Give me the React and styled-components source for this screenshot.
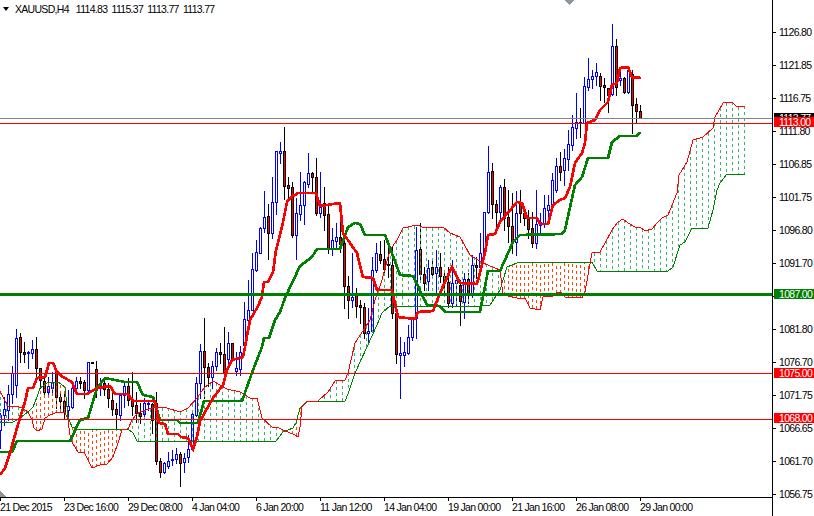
import React from "react";
import styled, { createGlobalStyle } from "styled-components";

const GlobalStyle = createGlobalStyle`
  html, body { margin: 0; padding: 0; background: #fff; overflow: hidden; }
`;

// high, body top, body bottom, low, bull - in chart pixels, one bar every 4px
const bars = [
  [413,415,430,448,1],[397,409,415,425,1],[385,394,410,420,1],[366,373,394,403,1],[329,338,385,397,1],[333,337,352,362,0],[342,352,354,362,0],[351,352,353,368,1],[340,349,353,358,1],[337,349,368,378,0],
  [368,368,380,388,0],[377,381,392,395,0],[377,386,392,397,1],[372,383,388,393,1],[370,372,397,408,0],[392,397,401,410,0],[392,401,411,418,0],[390,406,410,418,1],[383,388,407,408,1],[377,381,388,392,1],
  [377,381,383,388,0],[380,382,390,398,0],[362,362,390,392,1],[362,362,363,363,0],[361,369,388,397,0],[378,383,388,395,1],[377,383,389,395,0],[383,389,398,407,0],[390,400,409,415,0],[403,409,414,428,0],
  [393,395,415,420,1],[383,386,395,407,1],[378,386,400,405,0],[372,400,406,415,0],[392,405,413,422,0],[403,413,416,423,0],[398,403,414,417,1],[400,403,404,410,1],[403,404,420,433,0],[392,403,461,464,0],
  [458,461,472,477,0],[462,463,472,473,1],[452,461,466,468,1],[450,459,460,465,1],[448,454,459,463,1],[452,454,463,486,0],[453,458,462,472,1],[435,449,457,462,1],[410,414,449,450,1],[377,383,415,416,1],
  [344,351,383,398,1],[318,351,367,398,0],[363,367,377,386,0],[361,366,377,388,1],[348,352,366,370,1],[343,352,354,363,0],[327,354,372,372,0],[332,343,359,363,1],[343,343,359,359,0],[352,368,371,375,1],
  [346,352,369,375,1],[302,319,345,347,1],[280,310,320,320,1],[253,269,310,310,1],[240,252,270,271,1],[227,228,253,253,1],[191,217,228,232,1],[204,216,233,259,0],[177,202,233,238,1],[151,151,202,214,1],
  [142,151,153,163,1],[127,151,186,199,0],[177,185,188,200,0],[182,187,235,237,0],[198,213,235,259,1],[172,205,214,220,1],[181,182,205,224,1],[153,173,184,187,1],[172,173,177,193,0],[158,177,213,215,0],
  [172,207,213,217,1],[187,203,215,230,0],[205,214,248,253,0],[228,240,248,255,1],[223,237,241,247,1],[215,237,244,252,0],[233,243,286,308,0],[276,286,300,318,0],[253,297,300,307,1],[288,295,306,317,0],
  [300,305,307,323,0],[303,307,333,338,0],[308,331,333,342,1],[257,270,331,332,1],[243,253,270,272,1],[241,254,260,263,0],[240,259,269,275,0],[245,264,265,277,0],[247,265,313,318,0],[313,313,354,363,0],
  [337,353,355,398,1],[342,352,355,366,1],[325,337,353,354,1],[318,318,337,340,1],[227,250,318,338,1],[223,249,274,280,0],[267,274,283,290,0],[260,268,281,290,1],[260,267,274,277,0],[250,267,273,292,1],
  [253,267,276,282,0],[273,276,282,293,0],[267,282,303,307,0],[260,283,303,307,1],[273,280,283,305,1],[280,285,301,325,0],[273,279,302,318,1],[273,279,293,303,0],[255,265,293,297,1],[257,265,267,278,0],
  [233,253,267,273,1],[212,212,253,255,1],[146,172,212,213,1],[163,171,204,218,0],[200,204,212,227,0],[185,187,212,223,1],[179,187,218,230,0],[190,217,226,242,0],[193,226,242,253,0],[191,213,242,255,1],
  [190,203,213,222,0],[207,213,218,225,0],[210,219,229,238,0],[212,228,243,247,0],[190,224,243,248,1],[213,222,225,233,1],[195,208,224,227,1],[195,205,210,218,1],[173,180,206,208,1],[158,166,190,192,1],
  [152,166,172,180,0],[149,158,170,185,1],[130,144,159,170,1],[115,127,145,150,1],[93,122,128,138,1],[108,122,123,137,0],[77,86,123,123,1],[58,79,87,90,1],[70,76,79,88,1],[63,72,76,85,1],
  [73,76,86,100,0],[78,85,87,102,0],[88,88,95,112,0],[24,46,94,95,1],[39,46,87,95,0],[67,78,80,85,1],[77,78,92,93,0],[67,70,92,93,1],[70,74,105,133,0],[98,104,111,122,0],
  [105,111,118,118,0],
];

const tenkan = [[0,475],[5,468],[10,453],[15,435],[20,418],[25,402],[28,388],[33,388],[37,378],[45,377],[49,363],[53,363],[57,372],[63,377],[72,382],[77,394],[87,394],[97,388],[110,386],[115,394],[128,394],[133,401],[155,401],[159,423],[165,424],[168,434],[178,434],[181,437],[188,438],[193,449],[197,437],[200,421],[213,398],[223,385],[227,370],[232,360],[243,357],[245,347],[250,320],[257,308],[262,297],[264,282],[268,282],[273,272],[276,250],[282,227],[287,202],[290,198],[298,193],[316,193],[320,206],[340,203],[343,233],[357,253],[363,277],[373,278],[377,290],[392,290],[398,317],[415,319],[418,312],[433,311],[440,293],[452,267],[460,283],[477,284],[485,253],[488,235],[495,234],[500,222],[517,202],[522,203],[527,218],[537,218],[540,224],[548,224],[553,205],[560,200],[565,198],[570,187],[575,163],[582,153],[585,143],[587,123],[595,120],[600,110],[608,102],[612,85],[617,83],[620,68],[628,67],[632,77],[641,78]];

const kijun = [[0,452],[12,452],[17,441],[70,441],[80,420],[88,418],[97,388],[105,378],[125,382],[137,382],[143,395],[153,397],[160,420],[177,420],[180,423],[198,423],[204,401],[242,401],[253,370],[262,347],[264,338],[269,338],[275,320],[280,312],[285,298],[293,281],[300,266],[312,257],[317,249],[340,249],[348,227],[355,223],[360,224],[365,235],[385,235],[390,248],[400,275],[413,276],[427,305],[440,306],[445,312],[480,312],[488,271],[500,271],[513,242],[520,235],[562,234],[565,230],[575,185],[582,177],[588,158],[608,158],[612,142],[620,136],[637,136],[640,132]];

const senkouA = [[0,391],[4,399],[8,406],[16,406],[22,408],[28,412],[32,420],[34,428],[37,431],[42,429],[45,418],[50,415],[58,412],[65,412],[68,420],[70,435],[72,442],[78,452],[84,452],[92,468],[100,465],[107,464],[113,457],[118,443],[122,430],[128,429],[132,420],[136,415],[140,412],[146,410],[152,408],[157,407],[167,408],[180,412],[188,408],[197,398],[204,388],[213,381],[220,385],[227,389],[240,392],[250,398],[257,398],[262,418],[272,427],[277,427],[283,430],[295,435],[298,437],[300,427],[302,407],[306,402],[318,401],[328,392],[335,381],[345,380],[348,373],[355,343],[370,320],[375,300],[382,280],[390,250],[397,240],[403,228],[417,225],[425,228],[443,227],[450,233],[460,237],[470,255],[483,263],[500,270],[503,295],[517,298],[525,298],[530,308],[540,310],[543,297],[553,296],[557,292],[562,293],[565,297],[582,298],[585,292],[588,275],[592,253],[600,252],[605,243],[612,230],[618,222],[623,219],[628,223],[635,227],[640,227],[645,231],[652,229],[657,223],[662,218],[668,215],[677,193],[679,175],[687,162],[693,140],[703,137],[713,128],[715,117],[723,103],[732,102],[737,107],[745,106]];

const senkouB = [[0,422],[13,422],[20,418],[28,412],[33,407],[37,397],[40,388],[47,383],[58,382],[65,387],[68,417],[72,427],[80,430],[128,429],[133,433],[137,441],[276,441],[283,432],[293,428],[296,423],[300,408],[307,402],[345,401],[348,394],[355,373],[367,347],[377,325],[382,313],[390,306],[482,306],[490,305],[500,290],[507,267],[517,263],[533,262],[592,262],[597,271],[668,271],[673,267],[680,245],[685,242],[692,228],[708,228],[713,210],[717,190],[720,183],[727,174],[745,174]];

const prices = ["1126.80","1121.85","1116.75","1111.80","1106.85","1101.75","1096.80","1091.70","","1081.80","1076.70","1071.75","1066.65","1061.70","1056.75"];
const times = ["21 Dec 2015","23 Dec 16:00","29 Dec 08:00","4 Jan 04:00","6 Jan 20:00","11 Jan 12:00","14 Jan 04:00","19 Jan 00:00","21 Jan 16:00","26 Jan 08:00","29 Jan 00:00"];
const tags = [
  { text: "1113.77", top: 113, bg: "#000" },
  { text: "1113.00", top: 117, bg: "#ff0000" },
  { text: "1087.00", top: 289, bg: "#008000" },
  { text: "1075.00", top: 368, bg: "#ff0000" },
  { text: "1068.00", top: 413, bg: "#ff0000" },
];

const toPoints = (list) => list.map((p) => p.join(",")).join(" ");

const valueAt = (list, x) => {
  for (let i = 1; i < list.length; i++) {
    if (x <= list[i][0]) {
      const [x0, y0] = list[i - 1];
      const [x1, y1] = list[i];
      return y0 + ((y1 - y0) * (x - x0)) / (x1 - x0);
    }
  }
  return list[list.length - 1][1];
};

const cloudColumns = [];
for (let x = 0; x <= 744; x += 2) {
  const a = Math.round(valueAt(senkouA, x));
  const b = Math.round(valueAt(senkouB, x));
  const bullish = a < b;
  // green hatch is wider apart than the orange one
  if (x % (bullish ? 6 : 4) === 0 && Math.abs(a - b) > 2) cloudColumns.push({ x, a, b, bullish });
}

function Chart() {
  return (
    <svg width="772" height="497" shapeRendering="crispEdges">
      {bars.map(([high, top, bottom, low, bull], i) => {
        const x = i * 4;
        return (
          <g key={x}>
            <line x1={x + 0.5} x2={x + 0.5} y1={high} y2={low + 1} stroke={bull ? "#0000ff" : "#000"} />
            <rect
              x={x - 0.5}
              y={top + 0.5}
              width="2"
              height={bottom - top}
              fill={bull ? "#fff" : "#ff0000"}
              stroke={bull ? "#0000ff" : "#000"}
            />
          </g>
        );
      })}
      {cloudColumns.map(({ x, a, b, bullish }) => (
        <line
          key={x}
          x1={x + 0.5}
          x2={x + 0.5}
          y1={a}
          y2={b}
          stroke={bullish ? "#3cb371" : "#ff4500"}
          strokeDasharray="3 3"
        />
      ))}
      <polyline points={toPoints(senkouB)} fill="none" stroke="#008000" />
      <polyline points={toPoints(senkouA)} fill="none" stroke="#ff0000" />
      <polyline points={toPoints(kijun)} fill="none" stroke="#008000" strokeWidth="2.7" />
      <polyline points={toPoints(tenkan)} fill="none" stroke="#ff0000" strokeWidth="2.7" />
      <line x1="0" x2="772" y1="118.5" y2="118.5" stroke="#778899" />
      <line x1="0" x2="772" y1="123.5" y2="123.5" stroke="#ff0000" />
      <line x1="0" x2="772" y1="294.5" y2="294.5" stroke="#008000" strokeWidth="3" />
      <line x1="0" x2="772" y1="373.5" y2="373.5" stroke="#ff0000" />
      <line x1="0" x2="772" y1="419.5" y2="419.5" stroke="#ff0000" />
      <polygon points="564,0 574,0 569,5" fill="#8c96a0" />
      <polygon points="0,491 6,497 0,497" fill="#8c96a0" />
    </svg>
  );
}

export default function App() {
  return (
    <Page>
      <GlobalStyle />
      <Plot>
        <Chart />
        <Legend>
          <Arrow />
          <span>XAUUSD,H4</span>
          <Quotes>1114.83 1115.37 1113.77 1113.77</Quotes>
        </Legend>
      </Plot>
      <PriceAxis>
        {prices.map((p, i) => (
          <PriceRow key={i}>{p}</PriceRow>
        ))}
        {tags.map((t) => (
          <PriceTag key={t.text} $top={t.top} $bg={t.bg}>
            {t.text}
          </PriceTag>
        ))}
      </PriceAxis>
      <TimeAxis>
        {times.map((t) => (
          <TimeCell key={t}>{t}</TimeCell>
        ))}
      </TimeAxis>
    </Page>
  );
}

const Page = styled.div`
  display: grid;
  grid-template-columns: 772px 42px;
  grid-template-rows: 497px 19px;
  width: 814px;
  height: 516px;
  background: #fff;
  color: #000;
  font-family: "Liberation Sans", Arial, sans-serif;
  font-size: 10.5px;
  letter-spacing: -0.7px;
  overflow: hidden;
`;

const Plot = styled.div`
  position: relative;
  overflow: hidden;
  svg { display: block; }
`;

const Legend = styled.div`
  position: absolute;
  top: 2px;
  left: 3px;
  display: flex;
  align-items: center;
  height: 13px;
`;

const Arrow = styled.i`
  width: 0;
  height: 0;
  margin-right: 6px;
  border-left: 3.5px solid transparent;
  border-right: 3.5px solid transparent;
  border-top: 4px solid #000;
`;

const Quotes = styled.span`
  margin-left: 7px;
  word-spacing: 2px;
`;

const PriceAxis = styled.div`
  position: relative;
  grid-row: 1 / 3;
  grid-column: 2;
  border-left: 1px solid #000;
  padding-top: 15.5px;
`;

const PriceRow = styled.div`
  display: flex;
  align-items: center;
  height: 33px;
  &::before {
    content: "";
    width: 3px;
    height: 1px;
    margin-right: 3px;
    background: #000;
  }
`;

const PriceTag = styled.div`
  position: absolute;
  top: ${(p) => p.$top}px;
  left: 1px;
  right: 0;
  height: 10px;
  padding-left: 5px;
  line-height: 10px;
  color: #fff;
  background: ${(p) => p.$bg};
`;

const TimeAxis = styled.div`
  display: flex;
  border-top: 1px solid #000;
`;

const TimeCell = styled.div`
  flex: none;
  width: 64px;
  box-sizing: border-box;
  position: relative;
  padding-top: 3px;
  white-space: nowrap;
  &::before {
    content: "";
    position: absolute;
    left: 0;
    top: 0;
    width: 1px;
    height: 3px;
    background: #000;
  }
`;
